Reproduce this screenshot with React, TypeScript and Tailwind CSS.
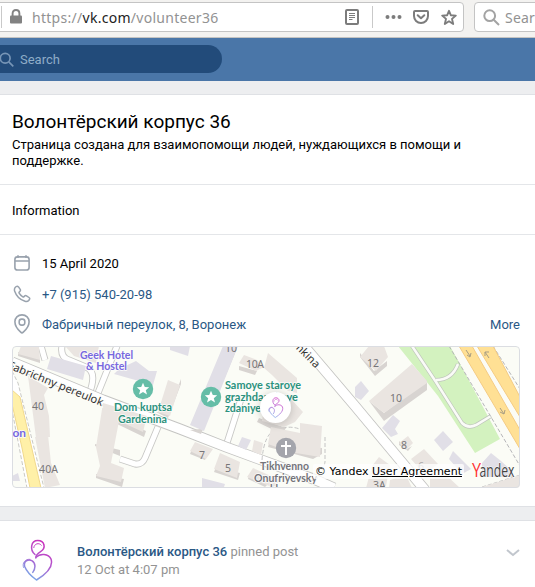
import React from "react";

function HeartLogo({ className, id }: { className: string; id: string }) {
  return (
    <svg className={className} viewBox="0 0 32 44" fill="none" strokeLinecap="round" strokeLinejoin="round">
      <defs>
        <linearGradient id={id} x1="25" y1="6" x2="6" y2="36" gradientUnits="userSpaceOnUse">
          <stop stopColor="#c932bc" />
          <stop offset=".5" stopColor="#b15bd0" />
          <stop offset="1" stopColor="#7ba4e6" />
        </linearGradient>
      </defs>
      <g stroke={`url(#${id})`} strokeWidth="1.5">
        <path d="M13 15.5C7.5 11 8.8 1.6 15.8 1.6C22.6 1.6 24.4 9 18.6 12.6C15 14.8 13.6 16 13.8 19" />
        <path d="M14 18.3C18 14.2 26.5 14.4 29 20C31.6 27.6 23.5 35.5 14.5 41C8.5 36.5 4.2 31.5 2.7 27.4C1.2 22.6 6 19.6 9.8 21.6C14 24 13.6 29.5 10.8 33.4" />
        <path d="M11.8 8.6C12.2 4.6 17 3.2 19.3 6.2" strokeWidth="1" />
        <path d="M1.5 28.5C-.2 24 3.2 19.8 8 20.3" strokeWidth=".9" />
      </g>
    </svg>
  );
}

function StarPin({ x, y }: { x: number; y: number }) {
  return (
    <g transform={`translate(${x} ${y})`}>
      <circle r="10.2" fill="#65bda7" />
      <path d="M0-6.2L1.8-2L6.2-1.8L2.8 1.2L4 5.6L0 3.1L-4 5.6L-2.8 1.2L-6.2-1.8L-1.8-2Z" fill="#fff" />
    </g>
  );
}

function CityMap() {
  return (
    <svg
      className="block h-full w-full"
      viewBox="12 346 508 142"
      preserveAspectRatio="none"
      fontFamily="'Noto Sans', 'Open Sans', sans-serif"
    >
      <rect x="12" y="346" width="508" height="142" fill="#fbfcf6" />

      {/* park */}
      <path d="M398 346H450L465 373L500 439L475 453L438 396Z" fill="#d3f2bf" />
      <g fill="none">
        <path d="M412 346L436 382L462 423Q468 429 476 425L491 416M436 380Q452 380 458 364" stroke="#bfc5bd" strokeWidth="4" />
        <path d="M412 346L436 382L462 423Q468 429 476 425L491 416M436 380Q452 380 458 364" stroke="#fafbf7" strokeWidth="2.6" />
        <path d="M449 346L520 466M493 346L520 389" stroke="#b5b5b8" strokeDasharray="4 2" />
      </g>

      {/* avenues */}
      <path d="M459 346H472L520 430V449Z" fill="#ffe094" stroke="#f4cb83" />
      <path d="M477 346H493L520 397V417Z" fill="#ffe094" stroke="#f4cb83" />
      <g stroke="#a79d83" fill="none">
        <path d="M466 350L470 356M467 355L470 357L471 353M500 408L504 414M500 412L504 414L505 410M489 358L485 352M485 356L485 352L489 352" />
      </g>
      <path d="M12 371L18 383L44 488H27L12 410Z" fill="#fff" stroke="#c9c9c5" strokeDasharray="4 2" />
      <path d="M12 390L20 397L41 488H30L22 448L12 404Z" fill="#fff0a8" stroke="#f1d98c" />

      {/* side streets */}
      <g fill="none" strokeLinejoin="round">
        <path d="M62 346Q60 357 69 360L88 368Q97 374 89 394M98 393L117 346M158 427L145 458Q142 465 135 464L120 459M226 446L241 399M41 346L45 360" stroke="#c8c8c6" strokeWidth="7" />
        <path d="M62 346Q60 357 69 360L88 368Q97 374 89 394M98 393L117 346M158 427L145 458Q142 465 135 464L120 459M226 446L241 399M41 346L45 360" stroke="#fff" strokeWidth="5.2" />
        <path d="M12 362L103 400L180 429L226 447L316 480L334 488M304 346L355 406L425 490" stroke="#c4c4c2" strokeWidth="11" />
        <path d="M12 362L103 400L180 429L226 447L316 480L334 488M304 346L355 406L425 490" stroke="#fff" strokeWidth="9.3" />
        <path d="M262 460Q264 433 277 429Q296 424 306 433M325 437L325 462Q320 485 305 480M482 487L520 475" stroke="#c4c4c4" strokeDasharray="4 2" />
      </g>

      {/* building side walls */}
      <g fill="#d8d4d1">
        <path d="M18 356L40 363V359L18 352ZM95 446L120 456V450L95 444ZM96 478L122 487L124 479L96 474ZM156 412L168 418L181 384V379L168 413ZM117 424L144 437L146 431L118 418Z" />
        <path d="M190 430L201 434L236 351V346L201 429ZM239 370L255 375L257 371L239 366ZM257 422L282 434L286 428L259 418ZM190 454L205 460L208 454L192 449ZM214 472L238 480L240 473L216 467ZM268 447L313 459L322 454L322 448L269 443ZM360 357L375 376L387 366V361L374 371L360 353Z" />
        <path d="M369 401L384 421L427 390V380L384 413ZM399 445L408 451L412 446L407 449L399 441ZM248 479L265 487L274 478L264 482L249 475Z" />
      </g>
      <g fill="#eae5e1">
        <path d="M21 346H39L40 360L18 354ZM28 376L48 388L44 395L49 416L50 437L36 438ZM35 437L48 435L51 463L60 485L45 488ZM103 403L147 416L143 432L119 421L111 463L124 468L121 482L96 476L100 466L96 447ZM168 380L180 385L170 416L158 412ZM65 346H99L96 363L74 356Z" />
        <path d="M244 355L257 360L264 367L256 371L239 363ZM268 353L297 378V393L288 391L272 375L264 368ZM264 407L290 398L303 412L295 422L284 427L262 421ZM271 427L300 433L300 423L322 426L320 457L290 452L268 444ZM195 442L213 449L206 459L190 451ZM220 453L240 462L237 478L214 469ZM254 440L263 443L261 455L252 451ZM253 468L280 480L274 488L247 477Z" />
        <path d="M369 346H384L388 357L376 371L360 357ZM412 364L427 381V383L384 413L369 401ZM399 443L408 436L413 443L406 450ZM411 459L424 449L438 464L424 474ZM372 466L379 457L390 465L386 486L366 488ZM390 480L406 475L412 488H389ZM430 477L446 475L460 488H430ZM482 487L520 475V488Z" />
      </g>
      <g fill="#e1dfe7">
        <path d="M51 356L86 366L83 380L47 369ZM119 369L136 361L149 371L157 371L153 385L114 374ZM223 346H238L204 431L190 425ZM170 346H190L188 356L170 350ZM242 437L251 440L246 450L238 446Z" />
        <path d="M202 478L225 484L224 487H202ZM355 387L361 381L369 391L361 400L355 397ZM382 428L393 415L400 421L395 429L398 434L391 437ZM434 440L443 431L453 442L443 451ZM449 459L453 451L471 469L462 474ZM482 463L491 453L501 461L512 471V477H482ZM12 476L18 473L20 481H12Z" />
      </g>

      <g fill="#777578" fontSize="10.5">
        <text x="32" y="410">40</text>
        <text x="39" y="473" textLength="19">40A</text>
        <text x="225" y="352">10</text>
        <text x="246" y="368" textLength="18">10A</text>
        <text x="199" y="459">7</text>
        <text x="225" y="472">5</text>
        <text x="367" y="367">12</text>
        <text x="390" y="402">10</text>
        <text x="401" y="449">8</text>
        <text x="418" y="470" fill="#aaa8a8">6</text>
        <text x="373" y="489">3A</text>
      </g>

      <g fill="#333" stroke="#fcfcf8" strokeWidth="2" paintOrder="stroke" fontSize="11">
        <text transform="translate(7 368) rotate(22)" textLength="102" lengthAdjust="spacingAndGlyphs">Fabrichny pereulok</text>
        <text transform="translate(288 341) rotate(45)" textLength="39" lengthAdjust="spacingAndGlyphs">omkina</text>
      </g>

      <g stroke="#fcfcfb" strokeWidth="1.5" paintOrder="stroke" fontFamily="Lato, 'Noto Sans', sans-serif" fontWeight="700" fontSize="10.5">
        <g fill="#7768de">
          <text x="80" y="359" textLength="53" lengthAdjust="spacingAndGlyphs">Geek Hotel</text>
          <text x="86" y="370" textLength="41" lengthAdjust="spacingAndGlyphs">&amp; Hostel</text>
          <text x="8" y="437" textLength="18" lengthAdjust="spacingAndGlyphs">ton</text>
        </g>
        <g fill="#2b927d">
          <text x="114" y="411" textLength="58" lengthAdjust="spacingAndGlyphs">Dom kuptsa</text>
          <text x="118" y="423" textLength="49" lengthAdjust="spacingAndGlyphs">Gardenina</text>
          <text x="225" y="389" textLength="76" lengthAdjust="spacingAndGlyphs">Samoye staroye</text>
          <text x="225" y="401" textLength="73" lengthAdjust="spacingAndGlyphs">grazhdanskoye</text>
          <text x="225" y="412" textLength="36" lengthAdjust="spacingAndGlyphs">zdaniye</text>
        </g>
        <g fill="#74747a">
          <text x="260" y="470" textLength="49" lengthAdjust="spacingAndGlyphs">Tikhvenno</text>
          <text x="254" y="482" textLength="63" lengthAdjust="spacingAndGlyphs">Onufriyevsky</text>
          <text x="270" y="493">khram</text>
        </g>
      </g>

      <StarPin x={143} y={389} />
      <StarPin x={211} y={397} />
      <circle cx="286" cy="448" r="10.2" fill="#a4a5ac" />
      <path d="M286 441V455M281 446H291" stroke="#fff" strokeWidth="2" />
    </svg>
  );
}

function BrowserBar() {
  return (
    <div className="h-[38px] shrink-0 border-b border-[#c4c3c1] bg-[#f3f2f0]">
      <div className="flex pt-[2px]">
        <div className="-ml-[5px] flex h-[30px] w-[469px] shrink-0 items-center rounded-[4px] border border-[#c4c4c4] bg-white">
          <div className="ml-[5px] h-[22px] w-px bg-[#c9c9c9]" />
          <svg className="ml-[8px] h-4 w-3 shrink-0" viewBox="0 0 12 16">
            <rect y="6.6" width="12" height="8" rx="1" fill="#828282" />
            <path d="M2.6 7V4.5Q2.6 1 6 1T9.4 4.5V7" fill="none" stroke="#828282" strokeWidth="1.9" />
          </svg>
          <div className="ml-[10px] w-[200px] pt-[1px] whitespace-nowrap font-['Noto_Sans','Open_Sans',sans-serif] text-[14px] leading-[20px] tracking-[0.28px] text-[#929292]">
            https://<span className="text-[#222]">vk.com</span>/volunteer36
          </div>
          <svg className="ml-auto h-4 w-[14px] shrink-0" viewBox="0 0 14 16" fill="none" stroke="#7c7c7c">
            <rect x="1" y="1" width="12" height="14" rx="1" strokeWidth="2" />
            <path d="M4 4.5H10M4 6.5H10M4 8.5H10M4 10.5H7.5" />
          </svg>
          <div className="ml-[13px] h-[22px] w-px bg-[#c9c9c9]" />
          <svg className="ml-[12px] h-4 w-[17px] shrink-0" viewBox="0 0 17 16" fill="#7c7c7c">
            <circle cx="2.5" cy="8" r="2" /><circle cx="8.5" cy="8" r="2" /><circle cx="14.5" cy="8" r="2" />
          </svg>
          <svg className="ml-[11px] h-4 w-4 shrink-0" viewBox="0 0 16 16" fill="none" stroke="#7c7c7c" strokeWidth="2" strokeLinecap="round" strokeLinejoin="round">
            <path d="M2 2H14Q15 2 15 3V7A7 7 0 0 1 1 7V3Q1 2 2 2Z" />
            <path d="M4.7 6.2L8 9.3L11.3 6.2" />
          </svg>
          <svg className="mr-[6px] ml-[12px] h-[17px] w-4 shrink-0" viewBox="0 0 16 17" fill="none" stroke="#7c7c7c" strokeWidth="1.9" strokeLinejoin="round">
            <path d="M8 1.8L9.8 6.2L14.8 6.6L11 9.9L12.2 15L8 12.3L3.8 15L5 9.9L1.2 6.6L6.2 6.2Z" />
          </svg>
        </div>
        <div className="ml-[10px] flex h-[30px] w-[90px] shrink-0 items-center rounded-[4px] border border-[#c4c4c4] bg-white">
          <svg className="ml-[8px] h-[17px] w-[17px] shrink-0" viewBox="0 0 17 17" fill="none" stroke="#a3a3a3" strokeWidth="2">
            <circle cx="6.7" cy="6.7" r="5.4" /><path d="M10.7 10.7L16 16" />
          </svg>
          <span className="ml-[5px] pt-[1px] font-['Noto_Sans','Open_Sans',sans-serif] text-[14px] leading-[20px] tracking-[0.2px] text-[#929292]">Search</span>
        </div>
      </div>
    </div>
  );
}

export default function App() {
  return (
    <main className="flex h-[587px] w-[535px] flex-col overflow-hidden bg-[#edeef0] font-[Roboto,'Noto_Sans',sans-serif] text-[13px] text-black">
      <BrowserBar />
      <header className="flex h-[43px] shrink-0 items-start bg-[#4a76a8] pt-[7px]">
        <div className="-ml-[14px] flex h-[28px] w-[236px] items-center rounded-full bg-[#224b7a] text-[#8fadc8]">
          <svg className="ml-[13px] h-[15px] w-[15px]" viewBox="0 0 15 15" fill="none" stroke="#7795b6" strokeWidth="1.7">
            <circle cx="6.2" cy="6.2" r="4.9" /><path d="M9.8 9.8L14.3 14.3" />
          </svg>
          <span className="ml-[6px] pt-px leading-[16px]">Search</span>
        </div>
      </header>

      <section className="mt-[13px] h-[413px] shrink-0 border-y border-[#dfe1e5] bg-white">
        <div className="h-[90px] border-b border-[#e4e6e9] px-3 pt-[15px]">
          <h1 className="text-[19px] leading-[24px]">Волонтёрский корпус 36</h1>
          <p className="mt-[3px] w-[470px] leading-[16px]">Страница создана для взаимопомощи людей, нуждающихся в помощи и поддержке.</p>
        </div>
        <div className="flex h-[50px] items-center border-b border-[#e4e6e9] px-3 pt-[2px]">Information</div>
        <div className="px-3 pt-[13px]">
          <div className="flex h-[31px] items-center">
            <svg className="mb-[2px] ml-[2px] h-4 w-4" viewBox="0 0 16 16" fill="none" stroke="#99a2ad" strokeWidth="1.6">
              <rect x=".9" y="1.9" width="14.2" height="13.1" rx="2.6" /><path d="M1 6H15M4 .3V3M12 .3V3" />
            </svg>
            <span className="ml-3">15 April 2020</span>
          </div>
          <div className="flex h-[31px] items-center text-[#2a5885]">
            <svg className="mb-[2px] ml-[1px] h-[18px] w-[18px]" viewBox="0 0 18 18" fill="none" stroke="#99a2ad" strokeWidth="1.5" strokeLinejoin="round">
              <path d="M2.4 2.3L3.3 1.5Q4.4.7 5.5 1.9L7.2 4.4Q7.8 5.3 7 6.2L6.1 7.2Q5.8 7.8 6.5 8.7Q7.7 10.7 9.8 11.8Q10.5 12.1 11 11.6L11.8 10.9Q12.6 10.2 13.5 10.8L16 12.5Q17.2 13.4 16.4 14.5L15.7 15.5Q14.4 17 12 16.3C7 14.8 3.3 11 1.7 6.3Q.9 3.8 2.4 2.3Z" />
            </svg>
            <span className="ml-[11px]">+7 (915) 540-20-98</span>
          </div>
          <div className="flex h-[29px] items-center text-[#2a5885]">
            <svg className="mb-[2px] ml-[2px] h-[20px] w-4" viewBox="0 0 16 20" fill="none" stroke="#99a2ad" strokeWidth="1.6">
              <path d="M8 .9C3.8.9.9 4 .9 7.8C.9 11.6 3.7 15.5 6.7 18.2Q8 19.4 9.3 18.2C12.3 15.5 15.1 11.6 15.1 7.8C15.1 4 12.2.9 8 .9Z" />
              <rect x="5.2" y="5.1" width="5.6" height="6" rx="2.3" />
            </svg>
            <span className="ml-3">Фабричный переулок, 8, Воронеж</span>
            <span className="mr-[3px] ml-auto">More</span>
          </div>
          <div className="relative mt-[7px] h-[142px] w-[508px] overflow-hidden rounded-[4px]">
            <CityMap />
            <div className="absolute top-[46px] left-[248px] flex h-[31px] w-[31px] items-center justify-center rounded-full bg-white shadow-[0_1px_9px_rgba(0,0,0,0.2)]">
              <HeartLogo id="pin-gradient" className="h-[22px] w-[16px]" />
            </div>
            <div className="absolute right-[56px] bottom-[9px] rounded-[2px] bg-white/75 pr-[2px] pl-[2px] whitespace-nowrap font-['DejaVu_Sans',sans-serif] text-[11px] leading-[15px] tracking-[0.02px] text-black">
              © Yandex <span className="underline">User Agreement</span>
            </div>
            <svg className="absolute right-[4px] bottom-[6px] h-[22px] w-[45px]" viewBox="0 0 45 22">
              <g fontFamily="'Open Sans', sans-serif" fontSize="20" stroke="#fff" strokeWidth="1" paintOrder="stroke">
                <text x="1" y="17" textLength="9" lengthAdjust="spacingAndGlyphs" fill="#f33">Y</text>
                <text x="8.5" y="17" fontSize="17.5" textLength="35" lengthAdjust="spacingAndGlyphs" fill="#444">andex</text>
              </g>
            </svg>
            <div className="absolute inset-0 rounded-[4px] border border-[#dbdde2]" />
          </div>
        </div>
      </section>

      <section className="mt-[13px] flex flex-1 items-start border-t border-[#dfe1e5] bg-white pt-[18px]">
        <HeartLogo id="avatar-gradient" className="ml-[22px] h-[44px] w-[32px] shrink-0" />
        <div className="ml-[23px] pt-[4px]">
          <div className="leading-[18px] text-[#939393]"><span className="font-medium text-[#2a5885]">Волонтёрский корпус 36</span> pinned post</div>
          <div className="leading-[18px] text-[#939393]">12 Oct at 4:07 pm</div>
        </div>
        <svg className="mt-[10px] mr-[15px] ml-auto h-2 w-[14px]" viewBox="0 0 14 8" fill="none" stroke="#c1c6cd" strokeWidth="2">
          <path d="M1 1L7 6L13 1" />
        </svg>
      </section>
    </main>
  );
}
